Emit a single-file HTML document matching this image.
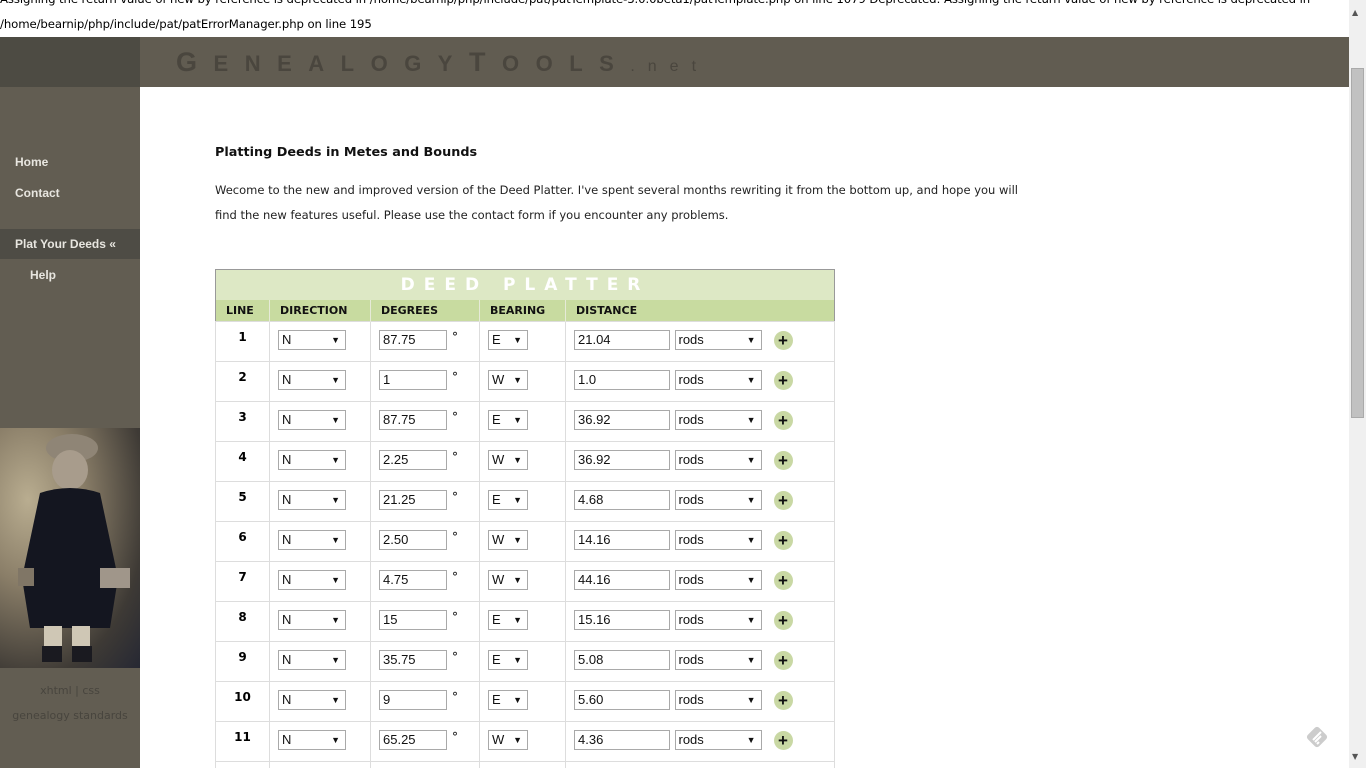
<!DOCTYPE html>
<html><head><meta charset="utf-8"><style>
*{box-sizing:border-box}
html{overflow:hidden;height:768px}
body{margin:0;width:1366px;height:768px;overflow:hidden;background:#fff;font-family:"DejaVu Sans",Verdana,sans-serif;position:relative}
.err{position:absolute;left:0;top:-13px;font-size:11.7px;line-height:25px;color:#000;white-space:nowrap;letter-spacing:-0.1px}
.hdrL{position:absolute;left:0;top:37px;width:140px;height:50px;background:#4d4b43}
.hdr{position:absolute;left:140px;top:37px;width:1209px;height:50px;background:#615c51}
.logo{position:absolute;left:176px;top:47px;font-family:"Liberation Sans",Arial,sans-serif;font-weight:bold;font-size:22px;letter-spacing:16.5px;color:#4a463e;white-space:nowrap}
.logo small{font-size:16px;font-weight:normal;letter-spacing:13px}
.logo .big{font-size:27px}
.side{position:absolute;left:0;top:87px;width:140px;height:681px;background:#625d52}
.nav{position:absolute;left:15px;font-family:"Liberation Sans",Arial,sans-serif;font-weight:bold;font-size:12px;color:#e8e6e0}
.act{position:absolute;left:0;top:229px;width:140px;height:30px;background:#4e4c45}
.photo{position:absolute;left:0;top:428px;width:140px;height:240px;background:radial-gradient(ellipse at 20% 30%,#b9ad90 0%,#8a7e68 35%,#3e3a35 75%,#262833 100%)}
.foot{position:absolute;font-size:11px;color:#48453e;width:140px;text-align:center}
h1{position:absolute;left:215px;top:145px;margin:0;font-size:12.8px;font-weight:bold;color:#111}
.p{position:absolute;left:215px;top:178px;font-size:11.5px;line-height:25px;color:#222;width:830px}
table{position:absolute;left:215px;top:269px;width:620px;border-collapse:collapse;border:1px solid #999;font-size:11px}
th.t{height:30px;background:#dde8c5;color:#fff;font-size:17px;letter-spacing:9px;text-align:center;font-weight:bold;padding:0}
tr.h th{height:22px;background:#c8dba0;text-align:left;padding-left:10px;font-size:11px;color:#111;border-left:1px solid #e6ead8}
td{height:40px;border:1px solid #ddd;vertical-align:top;padding:8px 0 0 8px;position:relative}
td.n{text-align:center;font-weight:bold;font-size:12px;padding:8px 0 0 0}
.s,.i{display:inline-block;height:20px;border:1px solid #a9a9a9;font-family:"Liberation Sans",Arial,sans-serif;font-size:13px;line-height:18px;padding-left:3px;vertical-align:top;position:relative;background:#fff;color:#111}
.s:after{content:"▼";position:absolute;right:5px;top:0;font-size:9px}
.dg{position:absolute;left:81px;top:8px;font-size:12px}
.pl{display:inline-block;width:19px;height:19px;border-radius:50%;background:#c9d8a4;vertical-align:top;margin:1px 0 0 12px;text-align:center;font-weight:bold;font-size:17px;line-height:19px;color:#111;font-family:"Liberation Sans",Arial,sans-serif}
.sb{position:absolute;left:1349px;top:0;width:17px;height:768px;background:#f0f0f0}
.th{position:absolute;left:1351px;top:68px;width:13px;height:350px;background:#c1c1c1;border:1px solid #aaa}
</style></head><body>
<div class="err">Assigning the return value of new by reference is deprecated in /home/bearnip/php/include/pat/patTemplate-3.0.0beta1/patTemplate.php on line 1079 Deprecated: Assigning the return value of new by reference is deprecated in<br>/home/bearnip/php/include/pat/patErrorManager.php on line 195</div>
<div class="hdrL"></div><div class="hdr"></div>
<div class="logo"><span class="big">G</span>ENEALOGY<span class="big">T</span>OOLS<small>.net</small></div>
<div class="side"></div>
<div class="act"></div>
<div class="nav" style="top:155px">Home</div>
<div class="nav" style="top:186px">Contact</div>
<div class="nav" style="top:237px">Plat Your Deeds «</div>
<div class="nav" style="top:268px;left:30px">Help</div>
<div class="photo">
<svg width="140" height="240" style="position:absolute;left:0;top:0"><ellipse cx="72" cy="20" rx="26" ry="14" fill="#8f8576"/><ellipse cx="70" cy="42" rx="18" ry="20" fill="#a89c8c"/><path d="M40 65 Q70 55 100 65 L118 150 L110 200 L30 200 L22 150 Z" fill="#141620"/><rect x="44" y="198" width="18" height="22" fill="#cfc7b5"/><rect x="72" y="198" width="18" height="22" fill="#cfc7b5"/><rect x="42" y="218" width="20" height="16" fill="#1a1a20"/><rect x="72" y="218" width="20" height="16" fill="#1a1a20"/><rect x="100" y="140" width="30" height="20" fill="#a0968a"/><rect x="18" y="140" width="16" height="18" fill="#807666"/></svg>
</div>
<div class="foot" style="top:684px">xhtml | css</div>
<div class="foot" style="top:709px">genealogy standards</div>
<h1>Platting Deeds in Metes and Bounds</h1>
<div class="p">Wecome to the new and improved version of the Deed Platter. I've spent several months rewriting it from the bottom up, and hope you will<br>find the new features useful. Please use the contact form if you encounter any problems.</div>
<table>
<tr><th class="t" colspan="5">DEED PLATTER</th></tr>
<tr class="h"><th style="width:54px;padding-left:10px;border-left:none">LINE</th><th style="width:101px">DIRECTION</th><th style="width:109px">DEGREES</th><th style="width:86px">BEARING</th><th>DISTANCE</th></tr>
<tr><td class="n">1</td><td><span class="s" style="width:68px">N</span></td><td><span class="i" style="width:68px">87.75</span><span class="dg">°</span></td><td><span class="s" style="width:40px">E</span></td><td><span class="i" style="width:96px">21.04</span> <span class="s" style="width:87px;margin-left:1px">rods</span><span class="pl">+</span></td></tr>
<tr><td class="n">2</td><td><span class="s" style="width:68px">N</span></td><td><span class="i" style="width:68px">1</span><span class="dg">°</span></td><td><span class="s" style="width:40px">W</span></td><td><span class="i" style="width:96px">1.0</span> <span class="s" style="width:87px;margin-left:1px">rods</span><span class="pl">+</span></td></tr>
<tr><td class="n">3</td><td><span class="s" style="width:68px">N</span></td><td><span class="i" style="width:68px">87.75</span><span class="dg">°</span></td><td><span class="s" style="width:40px">E</span></td><td><span class="i" style="width:96px">36.92</span> <span class="s" style="width:87px;margin-left:1px">rods</span><span class="pl">+</span></td></tr>
<tr><td class="n">4</td><td><span class="s" style="width:68px">N</span></td><td><span class="i" style="width:68px">2.25</span><span class="dg">°</span></td><td><span class="s" style="width:40px">W</span></td><td><span class="i" style="width:96px">36.92</span> <span class="s" style="width:87px;margin-left:1px">rods</span><span class="pl">+</span></td></tr>
<tr><td class="n">5</td><td><span class="s" style="width:68px">N</span></td><td><span class="i" style="width:68px">21.25</span><span class="dg">°</span></td><td><span class="s" style="width:40px">E</span></td><td><span class="i" style="width:96px">4.68</span> <span class="s" style="width:87px;margin-left:1px">rods</span><span class="pl">+</span></td></tr>
<tr><td class="n">6</td><td><span class="s" style="width:68px">N</span></td><td><span class="i" style="width:68px">2.50</span><span class="dg">°</span></td><td><span class="s" style="width:40px">W</span></td><td><span class="i" style="width:96px">14.16</span> <span class="s" style="width:87px;margin-left:1px">rods</span><span class="pl">+</span></td></tr>
<tr><td class="n">7</td><td><span class="s" style="width:68px">N</span></td><td><span class="i" style="width:68px">4.75</span><span class="dg">°</span></td><td><span class="s" style="width:40px">W</span></td><td><span class="i" style="width:96px">44.16</span> <span class="s" style="width:87px;margin-left:1px">rods</span><span class="pl">+</span></td></tr>
<tr><td class="n">8</td><td><span class="s" style="width:68px">N</span></td><td><span class="i" style="width:68px">15</span><span class="dg">°</span></td><td><span class="s" style="width:40px">E</span></td><td><span class="i" style="width:96px">15.16</span> <span class="s" style="width:87px;margin-left:1px">rods</span><span class="pl">+</span></td></tr>
<tr><td class="n">9</td><td><span class="s" style="width:68px">N</span></td><td><span class="i" style="width:68px">35.75</span><span class="dg">°</span></td><td><span class="s" style="width:40px">E</span></td><td><span class="i" style="width:96px">5.08</span> <span class="s" style="width:87px;margin-left:1px">rods</span><span class="pl">+</span></td></tr>
<tr><td class="n">10</td><td><span class="s" style="width:68px">N</span></td><td><span class="i" style="width:68px">9</span><span class="dg">°</span></td><td><span class="s" style="width:40px">E</span></td><td><span class="i" style="width:96px">5.60</span> <span class="s" style="width:87px;margin-left:1px">rods</span><span class="pl">+</span></td></tr>
<tr><td class="n">11</td><td><span class="s" style="width:68px">N</span></td><td><span class="i" style="width:68px">65.25</span><span class="dg">°</span></td><td><span class="s" style="width:40px">W</span></td><td><span class="i" style="width:96px">4.36</span> <span class="s" style="width:87px;margin-left:1px">rods</span><span class="pl">+</span></td></tr>
<tr><td class="n">12</td><td></td><td></td><td></td><td></td></tr>
</table>
<svg style="position:absolute;left:1304px;top:724px" width="26" height="26"><rect x="5" y="5" width="16" height="16" rx="3" fill="#ccc" transform="rotate(45 13 13)"/><path d="M9 16 L17 8 M11 18 L17 12 M13 20 L15 18" stroke="#fff" stroke-width="2"/></svg>
<div class="sb"></div><div class="th"></div>
<div style="position:absolute;left:1352px;top:8px;font-size:8px;color:#555">▲</div>
<div style="position:absolute;left:1352px;top:752px;font-size:8px;color:#555">▼</div>
</body></html>
